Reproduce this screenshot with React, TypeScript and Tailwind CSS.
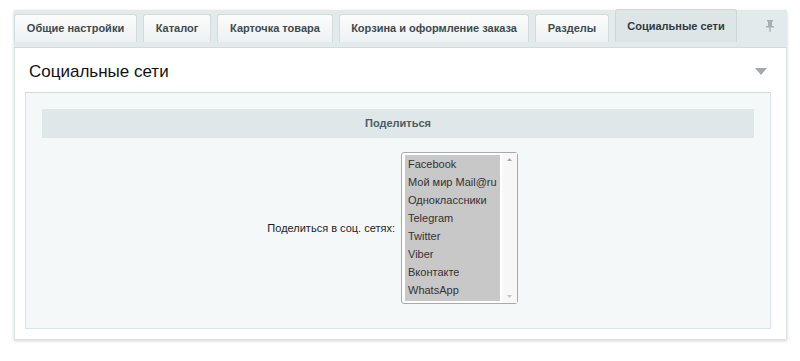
import React from "react";

const tabs = [
  { label: "Общие настройки", w: "w-[123px]" },
  { label: "Каталог", w: "w-[68px]" },
  { label: "Карточка товара", w: "w-[116px]" },
  { label: "Корзина и оформление заказа", w: "w-[190px]" },
  { label: "Разделы", w: "w-[74px]" },
];

const networks = [
  "Facebook",
  "Мой мир Mail@ru",
  "Одноклассники",
  "Telegram",
  "Twitter",
  "Viber",
  "Вконтакте",
  "WhatsApp",
];

export default function App() {
  return (
    <div className="w-[800px] h-[361px] bg-white pt-[10px] pl-[14px] font-['Liberation_Sans',Arial,sans-serif]">
      <div className="w-[773px] shadow-[0_1px_3px_rgba(0,0,0,0.18)]">
        {/* Tabs */}
        <div className="h-[38px] pb-[5px] flex items-end gap-[6px] bg-[#e3eaec] border-b border-[#d3dadc]">
          {tabs.map((t) => (
            <div
              key={t.label}
              className={`${t.w} shrink-0 whitespace-nowrap h-[28px] flex items-center justify-center rounded-t-[3px] border border-b-0 border-[#d4d9db] bg-gradient-to-b from-[#fbfcfc] to-[#eef1f2] text-[11px] font-bold text-[#3d4a4e]`}
            >
              {t.label}
            </div>
          ))}
          <div className="w-[122px] shrink-0 whitespace-nowrap h-[33px] flex items-center justify-center rounded-t-[3px] border border-b-0 border-[#cfd6d8] bg-[#dde5e7] text-[11px] font-bold text-[#2f3a3d]">
            Социальные сети
          </div>
          <div className="flex-1 flex justify-end pr-[13px] self-center">
            <svg width="8" height="12" viewBox="0 0 8 12">
              <rect x="1" y="0" width="6" height="1.5" fill="#a7afb2" />
              <rect x="2" y="1" width="4" height="5" fill="#a7afb2" />
              <rect x="0" y="6" width="8" height="1.5" fill="#a7afb2" />
              <rect x="3.4" y="7" width="1.2" height="5" fill="#a7afb2" />
            </svg>
          </div>
        </div>

        {/* Content */}
        <div className="bg-white border-x border-b border-[#dfe4e5] pb-[10px]">
          <div className="h-[44px] pt-[13px] pl-[14px] pr-[19px] flex justify-between">
            <div className="text-[17px] leading-[22px] text-[#111]">Социальные сети</div>
            <svg width="12" height="7" viewBox="0 0 12 7" className="mt-[7px]">
              <polygon points="0,0 12,0 6,7" fill="#a3a8ab" />
            </svg>
          </div>

          <div className="ml-[10px] mr-[15px] border border-[#dbe2e3] border-t-[#d3d9db] bg-[#f5f8f9] px-[16px] pt-[16px] pb-[24px]">
            <div className="h-[29px] bg-[#e0e7e9] flex items-center justify-center text-[11px] font-bold text-[#4a5d62]">
              Поделиться
            </div>
            <div className="mt-[14px] grid grid-cols-2">
              <div className="flex items-center justify-end pr-[3px] text-[11px] text-[#1e1e1e]">
                Поделиться в соц. сетях:
              </div>
              <div className="pl-[3px]">
                <div className="w-[117px] h-[152px] border border-[#a9a9a9] rounded-[3px] bg-white flex">
                  <div className="pl-[3px] pt-[2px]">
                    <div className="w-[95px] h-[146px] bg-[#c8c8c8]">
                      {networks.map((n) => (
                        <div key={n} className="h-[18px] leading-[18px] pl-[3px] text-[11px] text-[#333] whitespace-nowrap">
                          {n}
                        </div>
                      ))}
                    </div>
                  </div>
                  <div className="ml-auto w-[15px] bg-[#f7f7f7] flex flex-col justify-between items-center py-[5px]">
                    <svg width="5" height="3" viewBox="0 0 5 3">
                      <polygon points="0,3 5,3 2.5,0" fill="#a8a8a8" />
                    </svg>
                    <svg width="5" height="3" viewBox="0 0 5 3">
                      <polygon points="0,0 5,0 2.5,3" fill="#c4c4c4" />
                    </svg>
                  </div>
                </div>
              </div>
            </div>
          </div>
        </div>
      </div>
    </div>
  );
}
